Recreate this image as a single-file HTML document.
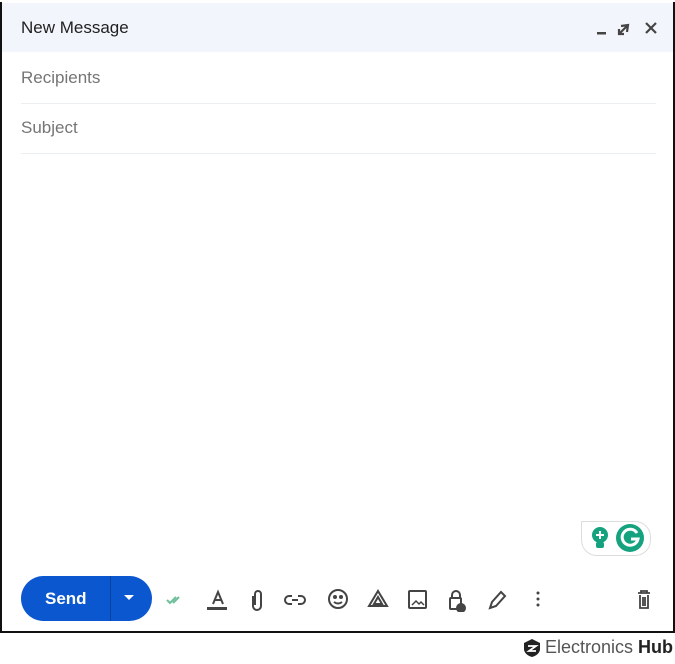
<!DOCTYPE html>
<html><head><style>
body{margin:0;width:675px;height:664px;background:#fff;font-family:"Liberation Sans",Arial,sans-serif;position:relative;overflow:hidden}
.frame{position:absolute;left:0;top:2px;width:671px;height:629px;border-left:2px solid #111;border-right:2px solid #111;border-bottom:2px solid #111}
.hdr{position:absolute;left:2px;top:3px;width:671px;height:49px;background:#f2f6fc}
.title{position:absolute;left:21px;top:18px;font-size:17px;color:#1f1f1f}
.f{position:absolute;left:21px;width:635px;height:50px;border-bottom:1px solid #eceff1;font-size:17px;color:#757575;line-height:50px}
.send{position:absolute;left:21px;top:576px;width:131px;height:45px;border-radius:23px;background:#0b57d0}
.send span{position:absolute;left:24px;top:13px;color:#fff;font-weight:bold;font-size:17px}
.send i{position:absolute;left:89px;top:0;width:1px;height:45px;background:#0842a0}
.ic{position:absolute;top:588px}
</style></head><body>
<div class="frame"></div>
<div class="hdr"></div>
<div class="title">New Message</div>
<svg style="position:absolute;left:594px;top:20px" width="70" height="18" viewBox="0 0 70 18">
<rect x="3" y="12" width="9" height="2.5" fill="#444"/>
<path d="M27 6l7-1-1 7M34 5l-9 9M25 9v5h5" stroke="#444" stroke-width="2.2" fill="none"/>
<path d="M52 3l10 10M62 3L52 13" stroke="#444" stroke-width="2.2"/>
</svg>
<div class="f" style="top:53px">Recipients</div>
<div class="f" style="top:103px">Subject</div>
<div style="position:absolute;left:581px;top:521px;width:68px;height:33px;border:1px solid #ddd;border-radius:0 16px 16px 16px;background:#fff"></div>
<svg style="position:absolute;left:587px;top:523px" width="60" height="30">
<circle cx="13" cy="12" r="8" fill="#15a37f"/><rect x="9" y="19" width="8" height="6" rx="2" fill="#15a37f"/><path d="M13 8v8M9 12h8" stroke="#fff" stroke-width="2"/>
<circle cx="43" cy="15" r="14" fill="#15a37f"/><path d="M50 10a8 8 0 1 0 1 6h-7" stroke="#fff" stroke-width="3" fill="none"/>
</svg>
<div class="send"><span>Send</span><i></i><svg style="position:absolute;left:103px;top:19px" width="10" height="6"><path d="M0 0h10L5 5z" fill="#fff"/></svg></div>
<svg class="ic" style="left:160px" width="500" height="24" viewBox="0 0 500 24" fill="none" stroke="#444" stroke-width="2">
<path d="M7 12l3 3 6-6" stroke="#6bbf9a"/><path d="M13 15l6-6" stroke="#6bbf9a"/>
<path d="M53 16l5-12 5 12M55 12h6" /><rect x="47" y="19" width="20" height="3" fill="#444" stroke="none"/>
<path d="M93 8v10a4 4 0 0 0 8 0V6a3 3 0 0 0-6 0v11" />
<path d="M132 8h-3a4 4 0 0 0 0 8h3M138 8h3a4 4 0 0 1 0 8h-3M132 12h6"/>
<circle cx="178" cy="11" r="9"/><circle cx="175" cy="9" r="1" fill="#444"/><circle cx="181" cy="9" r="1" fill="#444"/><path d="M174 14q4 3 8 0"/>
<path d="M218 3l9 15h-18z"/><path d="M218 9l4 7h-8z"/>
<rect x="249" y="3" width="17" height="17" rx="1"/><path d="M252 17l4-4 3 3 2-2 3 3" stroke-width="1.5"/>
<rect x="290" y="10" width="11" height="11" rx="1"/><path d="M292 10V7a4 4 0 0 1 8 0v3"/><circle cx="301" cy="20" r="4" fill="#444"/>
<path d="M330 20l2-6 9-10 4 4-9 10z"/>
<circle cx="378" cy="5" r="1.5" fill="#444" stroke="none"/><circle cx="378" cy="11" r="1.5" fill="#444" stroke="none"/><circle cx="378" cy="17" r="1.5" fill="#444" stroke="none"/>
<path d="M478 5h12M481 5V3h6v2M480 7v13h8V7M483 9v9M485 9v9" stroke-width="1.8"/>
</svg>
<svg style="position:absolute;left:522px;top:638px" width="20" height="20"><path d="M10 1l8 4v6c0 4-4 7-8 8-4-1-8-4-8-8V5z" fill="#222"/><path d="M6 8h8l-7 5h7" stroke="#fff" stroke-width="1.8" fill="none"/></svg>
<div style="position:absolute;left:545px;top:637px;font-size:18px;color:#555">Electronics <b style="color:#222">Hub</b></div>
</body></html>
